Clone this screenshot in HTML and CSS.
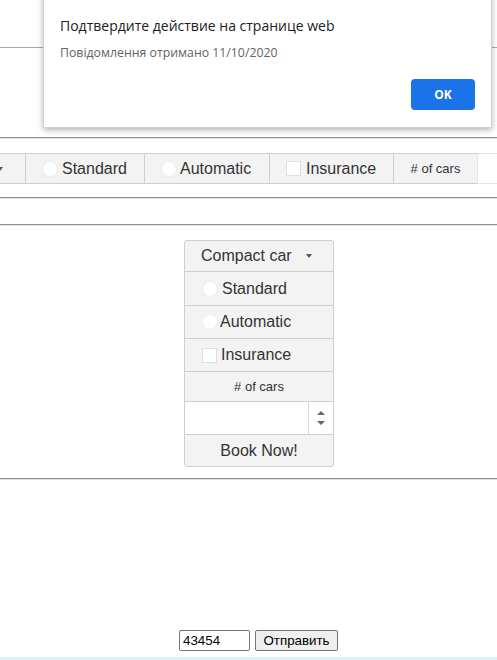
FILE: index.html
```html
<!DOCTYPE html>
<html lang="ru">
<head>
<meta charset="utf-8">
<title>Booking</title>
<link rel="stylesheet" href="styles.css">
</head>
<body>
<div class="page">
  <div class="band"></div>
  <hr class="rule rule-a">

  <div class="hgroup">
    <div class="hitem hdrop"><span class="caret"></span></div>
    <div class="hitem hlabel hstd"><span class="radio"></span>Standard</div>
    <div class="hitem hlabel haut"><span class="radio"></span>Automatic</div>
    <div class="hitem hlabel hins"><span class="check"></span>Insurance</div>
    <div class="hitem hcars">&#35; of cars</div>
    <div class="hinput"></div>
  </div>

  <hr class="rule rule-b">
  <hr class="rule rule-c">

  <div class="vgroup">
    <div class="vitem vdrop">Compact car<span class="caret"></span></div>
    <div class="vitem vlabel vstd"><span class="radio"></span>Standard</div>
    <div class="vitem vlabel vaut"><span class="radio"></span>Automatic</div>
    <div class="vitem vlabel vins"><span class="check"></span>Insurance</div>
    <div class="vitem vcars">&#35; of cars</div>
    <div class="vnum">
      <div class="spin"><span class="up"></span><span class="down"></span></div>
    </div>
    <div class="vitem vbook">Book Now!</div>
  </div>

  <hr class="rule rule-d">

  <form class="send">
    <input class="send-field" type="text" value="43454">
    <button class="send-btn" type="button">Отправить</button>
  </form>

  <div class="strip"></div>

  <div class="dialog">
    <div class="dialog-title">Подтвердите действие на странице web</div>
    <div class="dialog-sub">Повідомлення отримано 11/10/2020</div>
    <div class="dialog-actions"><button class="ok" type="button">OK</button></div>
  </div>
</div>
</body>
</html>
```

FILE: styles.css
```css
* { box-sizing: border-box; }
html, body { margin: 0; padding: 0; background: #fff; }
body {
  width: 497px;
  height: 660px;
  overflow: hidden;
  font-family: "Liberation Sans", Arial, sans-serif;
  color: #333;
}
.page { position: relative; width: 497px; height: 660px; overflow: hidden; }

.band { height: 48px; border-bottom: 1px solid #a9a9a9; }

.rule {
  margin: 0;
  height: 0;
  border: 0;
  border-top: 1px solid #8f8f8f;
  border-bottom: 1px solid #e2e2e2;
}
.rule-a { margin-top: 89px; }
.rule-b { margin-top: 13px; }
.rule-c { margin-top: 25px; }
.rule-d { margin-top: 11px; }

/* horizontal group */
.hgroup {
  margin-top: 14px;
  display: flex;
  height: 31px;
  margin-left: -115px;
}
.hitem {
  display: flex;
  align-items: center;
  height: 31px;
  background: #f3f3f3;
  border: 1px solid #cfcfcf;
  margin-right: -1px;
  font-size: 16px;
  color: #333;
  white-space: nowrap;
}
.hdrop { width: 141px; justify-content: flex-end; padding-right: 22px; }
.hlabel { padding: 0 16px; gap: 4px; }
.hstd { width: 120px; }
.haut { width: 126px; gap: 3px; }
.hins { width: 125px; gap: 5px; }
.hcars { width: 85px; justify-content: center; font-size: 13px; }
.hinput {
  flex: 1;
  height: 31px;
  background: #fff;
  border: 1px solid #e4e4e4;
  border-right: 0;
}

.caret {
  display: inline-block;
  width: 0;
  height: 0;
  border-top: 4px solid #555;
  border-left: 3.5px solid transparent;
  border-right: 3.5px solid transparent;
}
.radio {
  width: 16px;
  height: 16px;
  border-radius: 50%;
  background: #fff;
  border: 1px solid #ebebeb;
  flex: none;
}
.check {
  width: 15px;
  height: 15px;
  background: #fff;
  border: 1px solid #e0e0e0;
  flex: none;
}

/* vertical group */
.vgroup {
  margin: 14px 0 0 184px;
  width: 150px;
  display: flex;
  flex-direction: column;
}
.vitem {
  display: flex;
  align-items: center;
  background: #f3f3f3;
  border: 1px solid #cfcfcf;
  margin-bottom: -1px;
  font-size: 16px;
  color: #333;
  white-space: nowrap;
}
.vgroup > .vitem:first-child { border-radius: 3px 3px 0 0; }
.vgroup > .vitem:last-child { border-radius: 0 0 3px 3px; margin-bottom: 0; }
.vdrop { height: 32px; padding-left: 16px; justify-content: space-between; padding-right: 21px; }
.vlabel { padding-left: 17px; gap: 4px; }
.vstd { height: 35px; }
.vaut { height: 34px; gap: 2px; }
.vins { height: 34px; }
.vcars { height: 31px; justify-content: center; font-size: 13px; }
.vnum {
  height: 34px;
  background: #fff;
  border: 1px solid #cfcfcf;
  margin-bottom: -1px;
  display: flex;
  justify-content: flex-end;
}
.spin {
  width: 25px;
  border-left: 1px solid #d6d6d6;
  display: flex;
  flex-direction: column;
  align-items: center;
  justify-content: center;
  gap: 6px;
}
.up, .down {
  width: 0; height: 0;
  border-left: 4px solid transparent;
  border-right: 4px solid transparent;
}
.up { border-bottom: 4px solid #666; }
.down { border-top: 4px solid #666; }
.vbook { height: 33px; justify-content: center; }

/* bottom form */
.send {
  margin: 150px 0 0;
  padding-left: 20px;
  display: flex;
  justify-content: center;
  gap: 5px;
  height: 21px;
}
.send-field {
  width: 71px;
  height: 21px;
  font: 13.33px "Liberation Sans", Arial, sans-serif;
  color: #000;
  border: 1px solid #767676;
  border-radius: 2px;
  padding: 1px 3px;
  margin: 0;
}
.send-btn {
  width: 83px;
  height: 21px;
  font: 13.33px "Liberation Sans", Arial, sans-serif;
  color: #000;
  background: #efefef;
  border: 1px solid #767676;
  border-radius: 2px;
  padding: 0;
  margin: 0;
}
.strip {
  margin-top: 6px;
  height: 3px;
  background: #e1eef5;
}

/* dialog overlay */
.dialog {
  position: absolute;
  left: 43px;
  top: -10px;
  width: 449px;
  height: 138px;
  background: #fff;
  border: 1px solid #d2d2d2;
  box-shadow: 0 2px 6px rgba(0,0,0,0.3);
  padding: 25px 16px 0 16px;
  font-family: "Open Sans", "Noto Sans", sans-serif;
}
.dialog-title {
  font-size: 14px;
  color: #202124;
  line-height: 20px;
}
.dialog-sub {
  margin-top: 9px;
  font-size: 12.3px;
  color: #5f6368;
  line-height: 16px;
}
.dialog-actions {
  display: flex;
  justify-content: flex-end;
  margin-top: 18px;
}
.ok {
  width: 64px;
  height: 31px;
  background: #1a73e8;
  color: #fff;
  border: 0;
  border-radius: 4px;
  font: 700 12px "Open Sans", "Noto Sans", sans-serif;
  margin: 0;
}
```
